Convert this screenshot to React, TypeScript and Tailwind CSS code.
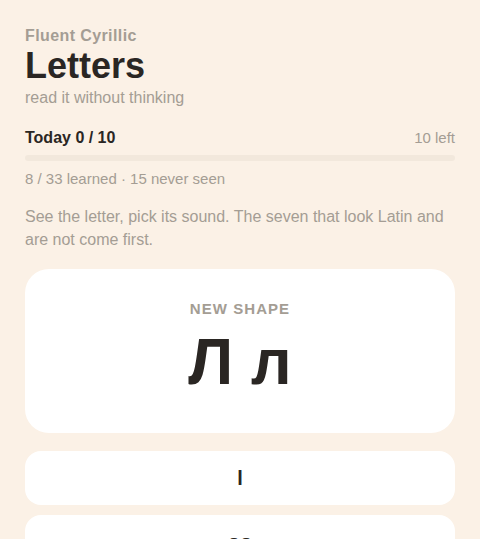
const options = ['l', 'oo', 'p', 'n'];

export default function App() {
  return (
    <div
      className="min-h-screen bg-[#fbf1e6] px-[25px] pt-[26px] pb-10 text-[#2a2623]"
      style={{ fontFamily: '"Liberation Sans", Arial, sans-serif' }}
    >
      {/* Header */}
      <div>
        <p className="text-base font-bold tracking-wide leading-5 text-[#a49d94]">Fluent Cyrillic</p>
        <h1 className="text-4xl font-bold leading-[40px] text-[#2a2623]">Letters</h1>
        <p className="mt-[2px] text-base leading-5 text-[#a49d94]">read it without thinking</p>
      </div>

      {/* Today progress */}
      <div className="mt-[18px]">
        <div className="flex items-baseline justify-between">
          <span className="text-base font-bold text-[#2a2623]">Today 0 / 10</span>
          <span className="text-[15px] text-[#a49d94]">10 left</span>
        </div>
        <div className="mt-[5px] h-[6px] w-full rounded-full bg-[#f2e8dc]" />
        <p className="mt-[8px] text-[15px] leading-5 text-[#a49d94]">8 / 33 learned · 15 never seen</p>
      </div>

      <p className="mt-[16px] text-base leading-[23px] text-[#a49d94]">
        See the letter, pick its sound. The seven that look Latin and are not come first.
      </p>

      {/* Letter card */}
      <div className="mt-[18px] flex h-[164px] flex-col items-center rounded-3xl bg-white pt-[29px]">
        <p className="text-[15px] font-bold uppercase tracking-[0.07em] text-[#a49d94]">New shape</p>
        <p className="mt-[9px] text-[64px] font-bold leading-[64px] text-[#2a2623]">Л л</p>
      </div>

      {/* Options */}
      <div className="mt-[18px] flex flex-col gap-[10px]">
        {options.map((o) => (
          <button
            key={o}
            className="flex h-[54px] w-full items-center justify-center rounded-2xl bg-white text-xl font-bold text-[#2a2623]"
          >
            {o}
          </button>
        ))}
      </div>
    </div>
  );
}
